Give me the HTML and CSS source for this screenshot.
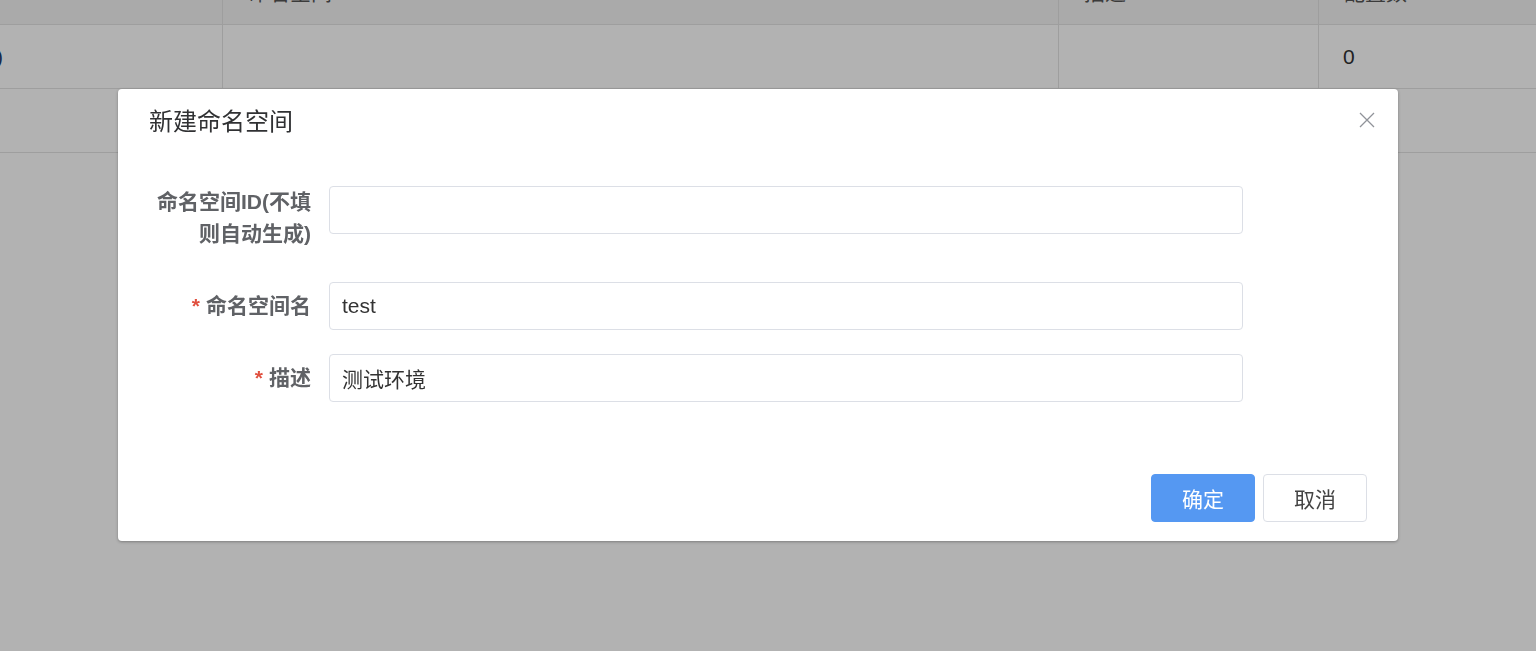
FILE: index.html
```html
<!DOCTYPE html>
<html lang="zh-CN">
<head>
    <meta charset="UTF-8">
    <meta name="viewport" content="width=device-width, initial-scale=1.0">
    <title>命名空间</title>
    <link rel="stylesheet" href="styles.css">
</head>
<body>

    <!-- Namespace list behind the dialog -->
    <div class="page">
        <table class="ns-table">
            <colgroup>
                <col class="col-id">
                <col class="col-name">
                <col class="col-desc">
                <col class="col-count">
            </colgroup>
            <thead>
                <tr>
                    <th></th>
                    <th>命名空间</th>
                    <th>描述</th>
                    <th>配置数</th>
                </tr>
            </thead>
            <tbody>
                <tr>
                    <td><span class="link-tail">)</span></td>
                    <td></td>
                    <td></td>
                    <td>0</td>
                </tr>
                <tr>
                    <td></td>
                    <td></td>
                    <td></td>
                    <td></td>
                </tr>
            </tbody>
        </table>
    </div>

    <div class="modal-mask"></div>

    <!-- New namespace dialog -->
    <div class="dialog">
        <div class="dialog-header">
            <span class="dialog-title">新建命名空间</span>
            <button class="dialog-close" aria-label="关闭">
                <svg width="16" height="16" viewBox="0 0 16 16">
                    <path d="M1 1 L15 15 M15 1 L1 15" stroke="#909399" stroke-width="1.3" fill="none"/>
                </svg>
            </button>
        </div>

        <div class="dialog-body">
            <div class="form-item form-item-wrap">
                <label class="form-label">命名空间ID(不填则自动生成)</label>
                <input class="form-input" type="text" value="">
            </div>
            <div class="form-item">
                <label class="form-label"><span class="required">*</span>命名空间名</label>
                <input class="form-input" type="text" value="test">
            </div>
            <div class="form-item">
                <label class="form-label"><span class="required">*</span>描述</label>
                <input class="form-input" type="text" value="测试环境">
            </div>
        </div>

        <div class="dialog-footer">
            <button class="btn btn-primary">确定</button>
            <button class="btn">取消</button>
        </div>
    </div>

</body>
</html>
```

FILE: styles.css
```css
html, body {
    margin: 0;
    height: 100%;
    overflow: hidden;
}

body {
    font-family: "Liberation Sans", "Noto Sans CJK SC", sans-serif;
    font-size: 21px;
    color: #606266;
    background: #fff;
}

/* table behind */

.page {
    overflow: hidden;
}

.ns-table {
    table-layout: fixed;
    width: 1620px;
    border-collapse: separate;
    border-spacing: 0;
    margin-top: -42px;
}

.col-id { width: 223px; }
.col-name { width: 836px; }
.col-desc { width: 260px; }
.col-count { width: 301px; }

.ns-table th,
.ns-table td {
    padding: 0 24px;
    text-align: left;
    vertical-align: middle;
    border-right: 1px solid #e3e3e3;
    border-bottom: 1px solid #e3e3e3;
    color: #555;
}

.ns-table th {
    height: 66px;
    background: #f4f4f4;
    font-weight: normal;
    padding-left: 25px;
}

.ns-table td {
    height: 63px;
    color: #303133;
}

.ns-table td:first-child {
    padding-left: 0;
}

.link-tail {
    margin-left: -4px;
    color: #1f3a6a;
}

.modal-mask {
    position: fixed;
    top: 0;
    left: 0;
    right: 0;
    bottom: 0;
    background: rgba(0, 0, 0, 0.3);
}

/* dialog */

.dialog {
    position: absolute;
    top: 89px;
    left: 118px;
    width: 1280px;
    background: #fff;
    border-radius: 4px;
    box-shadow: 0 1px 3px rgba(0, 0, 0, 0.3);
}

.dialog-header {
    padding: 20px 30px 10px 31px;
}

.dialog-title {
    font-size: 24px;
    line-height: 26px;
    color: #303133;
}

.dialog-close {
    position: absolute;
    top: 23px;
    right: 23px;
    width: 16px;
    height: 16px;
    padding: 0;
    border: none;
    background: none;
    cursor: pointer;
}

.dialog-close svg {
    display: block;
}

.dialog-body {
    padding: 41px 30px 43px;
}

.form-item {
    display: flex;
    align-items: flex-start;
    margin-bottom: 24px;
}

.form-item:last-child {
    margin-bottom: 0;
}

.form-item-wrap {
    margin-bottom: 32px;
}

.form-label {
    width: 181px;
    box-sizing: border-box;
    padding-right: 18px;
    text-align: right;
    font-weight: bold;
    line-height: 48px;
    color: #606266;
}

.form-item-wrap .form-label {
    line-height: 32px;
}

.required {
    color: #e0503f;
    margin-right: 6px;
}

.form-input {
    width: 914px;
    height: 48px;
    box-sizing: border-box;
    padding: 0 12px;
    border: 1px solid #dcdfe6;
    border-radius: 4px;
    font-family: inherit;
    font-size: 21px;
    color: #333;
    outline: none;
}

.dialog-footer {
    display: flex;
    justify-content: flex-end;
    gap: 8px;
    padding: 29px 31px 19px;
}

.btn {
    width: 104px;
    height: 48px;
    box-sizing: border-box;
    border: 1px solid #dcdfe6;
    border-radius: 4px;
    background: #fff;
    font-family: inherit;
    font-size: 21px;
    color: #444;
    cursor: pointer;
}

.btn-primary {
    background: #5598f2;
    border-color: #5598f2;
    color: #fff;
}
```
